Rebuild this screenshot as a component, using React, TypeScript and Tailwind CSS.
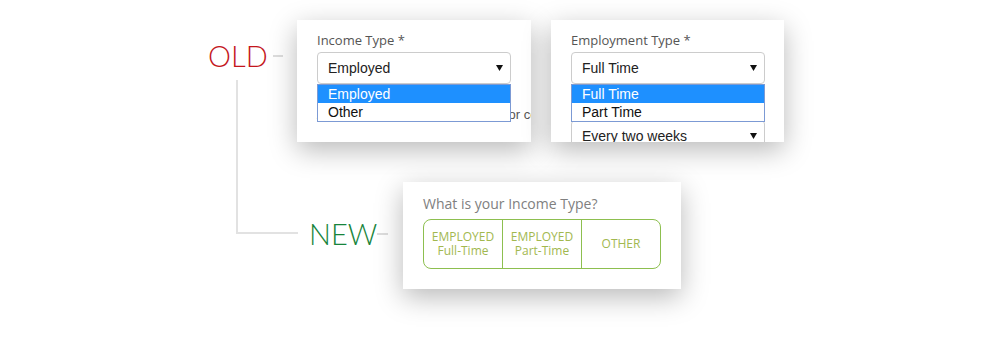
import React from "react";

const openSans = { fontFamily: '"Open Sans", "Liberation Sans", sans-serif' };
const arial = { fontFamily: '"Liberation Sans", Arial, sans-serif' };
const thin = { fontFamily: 'Lato, "Open Sans", sans-serif' };

function Caret() {
  return (
    <svg width="7" height="6" viewBox="0 0 7 6" className="shrink-0">
      <path d="M0 0 H7 L3.5 6 Z" fill="#111" />
    </svg>
  );
}

function FakeSelect({ value, className = "" }: { value: string; className?: string }) {
  return (
    <div
      className={`flex h-[32px] w-[194px] items-center justify-between rounded-[4px] border border-[#cccccc] bg-white pl-[10px] pr-[7px] text-[14px] text-[#222] ${className}`}
      style={arial}
    >
      <span>{value}</span>
      <Caret />
    </div>
  );
}

function OpenList({ items }: { items: string[] }) {
  return (
    <div
      className="absolute left-0 top-[32px] z-10 w-[194px] border border-[#7c9ad4] bg-white text-[14px] text-[#111]"
      style={arial}
    >
      {items.map((item, i) => (
        <div
          key={item}
          className={`flex h-[18px] items-center pl-[10px] ${i === 0 ? "bg-[#1e90ff] text-white" : ""}`}
        >
          {item}
        </div>
      ))}
    </div>
  );
}

const cardShadow = "shadow-[0_8px_26px_rgba(0,0,0,0.28)]";

export default function App() {
  return (
    <div className="flex h-[350px] w-[1000px] flex-col overflow-hidden bg-white" style={openSans}>
      {/* OLD row */}
      <div className="flex items-start pl-[208px] pt-[20px]">
        <div className="mt-[21px] flex h-[30px] items-center">
          <span className="w-[57px] whitespace-nowrap text-[29px] font-light leading-[30px] text-[#c4161c]" style={thin}>
            OLD
          </span>
          <div className="ml-[8px] h-[2px] w-[10px] bg-[#dddddd]" />
        </div>

        <div className={`ml-[14px] h-[122px] w-[234px] overflow-hidden bg-white px-[20px] pt-[11px] ${cardShadow}`}>
          <div className="text-[13px] leading-[18px] text-[#555]">Income Type *</div>
          <div className="relative mt-[3px]">
            <FakeSelect value="Employed" />
            <OpenList items={["Employed", "Other"]} />
          </div>
          <div className="mt-[23px] whitespace-nowrap text-[13px] leading-[16px] text-[#555]" style={arial}>
            Are you a member of the military or covered dependent?
          </div>
        </div>

        <div className={`ml-[20px] h-[122px] w-[233px] overflow-hidden bg-white px-[20px] pt-[11px] ${cardShadow}`}>
          <div className="text-[13px] leading-[18px] text-[#555]">Employment Type *</div>
          <div className="relative mt-[3px]">
            <FakeSelect value="Full Time" />
            <OpenList items={["Full Time", "Part Time"]} />
          </div>
          <FakeSelect value="Every two weeks" className="mt-[36px]" />
        </div>
      </div>

      {/* NEW row */}
      <div className="mt-[40px] flex items-start pl-[236px]">
        <div className="-mt-[102px] h-[154px] w-[62px] shrink-0 border-b-2 border-l-2 border-[#e2e2e2]" />
        <div className="ml-[11px] mt-[37px] flex h-[30px] items-center">
          <span className="w-[63px] whitespace-nowrap text-[29px] font-light leading-[30px] text-[#17843b]" style={thin}>
            NEW
          </span>
          <div className="ml-[5px] h-[2px] w-[11px] bg-[#dddddd]" />
        </div>

        <div className={`ml-[15px] w-[278px] bg-white px-[20px] pb-[20px] pt-[12px] ${cardShadow}`}>
          <div className="text-[14px] leading-[20px] text-[#808080]">What is your Income Type?</div>
          <div className="mt-[5px] flex h-[50px] w-[238px] overflow-hidden rounded-[8px] border border-[#8dbf4f] text-[12px] leading-[14px] text-[#a2b84f]">
            <div className="flex flex-1 flex-col items-center justify-center">
              <span>EMPLOYED</span>
              <span>Full-Time</span>
            </div>
            <div className="flex flex-1 flex-col items-center justify-center border-l border-[#8dbf4f]">
              <span>EMPLOYED</span>
              <span>Part-Time</span>
            </div>
            <div className="flex flex-1 items-center justify-center border-l border-[#8dbf4f]">
              <span>OTHER</span>
            </div>
          </div>
        </div>
      </div>
    </div>
  );
}
